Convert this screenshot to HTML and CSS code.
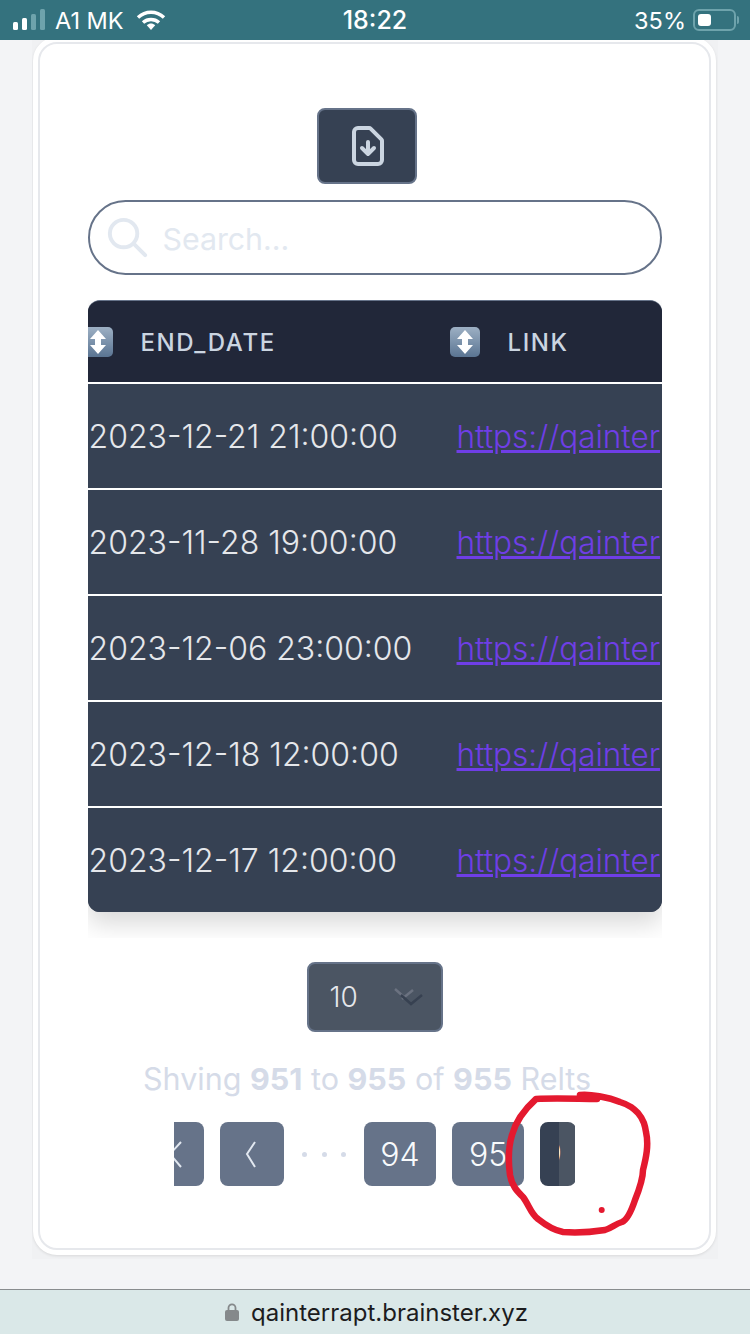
FILE: index.html
```html
<!DOCTYPE html>
<html lang="en">
<head>
  <meta charset="UTF-8" />
  <meta name="viewport" content="width=device-width, initial-scale=1.0" />
  <title>Events</title>
  <link rel="stylesheet" href="styles.css">
</head>
<body>
  <!-- Phone status bar -->
  <div class="status-bar">
    <div class="status-left">
      <svg class="signal" width="33" height="22" viewBox="0 0 33 22">
        <rect x="0" y="13" width="5" height="8" rx="1.5" fill="#fff"/>
        <rect x="9" y="9" width="5" height="12" rx="1.5" fill="#fff"/>
        <rect x="18" y="5" width="5" height="16" rx="1.5" fill="#6ea3ac"/>
        <rect x="27" y="0" width="5" height="21" rx="1.5" fill="#6ea3ac"/>
      </svg>
      <span class="carrier">A1 MK</span>
      <svg class="wifi" width="30" height="20" viewBox="0 0 30 20">
        <path d="M2 7.5C9.500 0.500 20.500 0.500 28 7.500" fill="none" stroke="#fff" stroke-width="3.400"/>
        <path d="M7 12.500C11.500 8.500 18.500 8.500 23 12.500" fill="none" stroke="#fff" stroke-width="3.400"/>
        <path d="M10.800 15.200C13.500 13 16.500 13 19.200 15.200L15 20Z" fill="#fff"/>
      </svg>
    </div>
    <div class="status-time">18:22</div>
    <div class="status-right">
      <span class="battery-pct">35%</span>
      <div class="battery"><div class="battery-fill"></div></div>
      <div class="battery-nub"></div>
    </div>
  </div>

  <main class="page">
    <div class="card-clip">
      <div class="card">
        <button class="export-btn" type="button">
          <svg width="48" height="48" viewBox="0 0 24 24" fill="none" stroke="#cbd5e1" stroke-width="2" stroke-linecap="round" stroke-linejoin="round">
            <path d="M12 10v6m0 0l-3-3m3 3l3-3m2 8H7a2 2 0 01-2-2V5a2 2 0 012-2h5.586a1 1 0 01.707.293l5.414 5.414a1 1 0 01.293.707V19a2 2 0 01-2 2z"/>
          </svg>
        </button>

        <div class="search">
          <svg width="47" height="47" viewBox="0 0 24 24" fill="none" stroke="#e2e8f0" stroke-width="2" stroke-linecap="round" stroke-linejoin="round">
            <path d="M21 21l-6-6m2-5a7 7 0 11-14 0 7 7 0 0114 0z"/>
          </svg>
          <span class="search-text">Search...</span>
        </div>

        <div class="table-clip">
          <div class="table-box">
            <table class="events">
              <thead>
                <tr>
                  <th>
                    <svg class="sort" width="30" height="30" viewBox="0 0 30 30"><use href="#sort-icon"/></svg>END_DATE
                  </th>
                  <th class="col-link">
                    <svg class="sort" width="30" height="30" viewBox="0 0 30 30"><use href="#sort-icon"/></svg>LINK
                  </th>
                </tr>
              </thead>
              <tbody>
                <tr><td>2023-12-21 21:00:00</td><td class="col-link"><a href="#">https://qainter</a></td></tr>
                <tr><td>2023-11-28 19:00:00</td><td class="col-link"><a href="#">https://qainter</a></td></tr>
                <tr><td>2023-12-06 23:00:00</td><td class="col-link"><a href="#">https://qainter</a></td></tr>
                <tr><td>2023-12-18 12:00:00</td><td class="col-link"><a href="#">https://qainter</a></td></tr>
                <tr><td>2023-12-17 12:00:00</td><td class="col-link"><a href="#">https://qainter</a></td></tr>
              </tbody>
            </table>
          </div>
        </div>

        <div class="per-page">
          <span>10</span>
          <svg width="30" height="18" viewBox="0 0 30 18" fill="none" stroke-width="2.500">
            <path d="M1 1L10 9" stroke="#6b7280"/>
            <path d="M19 2L8 11" stroke="#6b7280"/>
            <path d="M7 7L17 16L28 7" stroke="#374151"/>
          </svg>
        </div>

        <p class="summary">Shving <b>951</b> to <b>955</b> of <b>955</b> Relts</p>

        <div class="pager">
          <div class="page-btn page-first">
            <svg width="64" height="64" viewBox="0 0 64 64" fill="none" stroke="#e2e8f0" stroke-width="2"><path d="M41 20L30 32L41 45"/></svg>
          </div>
          <div class="page-btn">
            <svg width="64" height="64" viewBox="0 0 64 64" fill="none" stroke="#e2e8f0" stroke-width="2"><path d="M35 20L27 32L35 45"/></svg>
          </div>
          <div class="page-dots"><i></i><i></i><i></i></div>
          <div class="page-btn page-num">94</div>
          <div class="page-btn page-num">95</div>
          <div class="page-current">
            <div class="current-left"></div>
            <div class="current-right"><span>9</span></div>
          </div>
        </div>
      </div>
    </div>
  </main>

  <!-- Browser address bar -->
  <div class="url-bar">
    <svg width="14" height="18" viewBox="0 0 14 18">
      <path d="M3.500 8V4.800a3.500 3.500 0 017 0V8" fill="none" stroke="#85898b" stroke-width="1.800"/>
      <rect x="0" y="7" width="14" height="11" rx="2" fill="#85898b"/>
    </svg>
    <span>qainterrapt.brainster.xyz</span>
  </div>

  <!-- Red marker drawn over the screenshot -->
  <svg class="scribble" width="160" height="150" viewBox="0 0 160 150" fill="none" stroke="#e4192f" stroke-width="6.500" stroke-linecap="round" stroke-linejoin="round">
    <path d="M80 5C90 4 108 7 120 12C130 15 134 19 138 23C144 30 145 36 146 42C149 55 146 68 143 80C143 90 139 100 135 110C131 122 127 130 122 132C115 134 112 138 105 140C92 142 75 143 63 142C52 140 43 133 38 129C31 124 29 115 23 107C17 101 12 96 10 85C8 70 8 58 12 45C16 30 26 18 36 9C55 8 80 9 97 9"/>
    <circle cx="101.700" cy="120" r="3" fill="#e4192f" stroke="none"/>
  </svg>

  <svg class="defs" width="0" height="0">
    <defs>
      <linearGradient id="sort-grad" x1="0" y1="0" x2="0" y2="1">
        <stop offset="0" stop-color="#9db0c4"/>
        <stop offset="1" stop-color="#5a7492"/>
      </linearGradient>
      <g id="sort-icon">
        <rect width="30" height="30" rx="5" fill="url(#sort-grad)"/>
        <path d="M15 3L23 12H18V18H23L15 27L7 18H12V12H7Z" fill="#fff"/>
      </g>
    </defs>
  </svg>
</body>
</html>
```

FILE: styles.css
```css
:root {
  --slate-900: #212739;
  --slate-800: #364153;
  --slate-700: #4b5563;
  --slate-500: #667389;
  --slate-300: #cbd5e1;
  --slate-200: #e2e8f0;
}

* {
  box-sizing: border-box;
}

html, body {
  height: 100%;
}

body {
  margin: 0;
  position: relative;
  display: flex;
  flex-direction: column;
  width: 750px;
  height: 1334px;
  overflow: hidden;
  font-family: 'Inter', 'Liberation Sans', sans-serif;
  background-color: #f3f4f6;
}

/* status bar */
.status-bar {
  flex: none;
  height: 40px;
  padding: 0 13px;
  display: grid;
  grid-template-columns: 1fr auto 1fr;
  align-items: center;
  background-color: #34727e;
  color: #fff;
  font-size: 23.5px;
}

.status-left {
  display: flex;
  align-items: center;
}

.carrier {
  margin-left: 9px;
}

.wifi {
  margin-left: 12px;
}

.status-time {
  font-size: 25px;
  font-weight: 500;
}

.status-right {
  display: flex;
  align-items: center;
  justify-content: flex-end;
}

.battery {
  width: 43px;
  height: 22px;
  margin-left: 7px;
  padding: 3px;
  border: 2px solid #6ea3ac;
  border-radius: 6px;
}

.battery-fill {
  width: 13px;
  height: 100%;
  background-color: #fff;
  border-radius: 3px;
}

.battery-nub {
  width: 2px;
  height: 8px;
  margin-left: 1px;
  margin-right: -2px;
  background-color: #6ea3ac;
  border-radius: 0 2px 2px 0;
}

/* page + card */
.page {
  flex: 1;
  min-height: 0;
}

.card-clip {
  width: 686px;
  height: 1219px;
  margin-left: 32px;
  overflow: hidden;
  background-color: #f0f1f3;
}

.card {
  display: flex;
  flex-direction: column;
  align-items: center;
  width: 683px;
  height: 1218px;
  margin: -3px 0 0 1px;
  padding: 66px 50px 0;
  background-color: #fff;
  border: 5px solid #fff;
  border-radius: 24px;
  outline: 2px solid #e6e8ec;
  outline-offset: -7px;
  box-shadow: 0 1px 3px rgba(0, 0, 0, 0.1);
}

.export-btn {
  flex: none;
  width: 100px;
  height: 76px;
  margin-right: 16px;
  padding: 0 0 0 3px;
  display: flex;
  align-items: center;
  justify-content: center;
  background-color: var(--slate-800);
  border: 2px solid var(--slate-500);
  border-radius: 8px;
}

.search {
  flex: none;
  display: flex;
  align-items: center;
  width: 574px;
  height: 75px;
  margin-top: 16px;
  padding-left: 14px;
  border: 2px solid var(--slate-500);
  border-radius: 38px;
}

.search-text {
  margin: 2px 0 0 12px;
  font-size: 30.3px;
  color: var(--slate-200);
}

/* table */
.table-clip {
  flex: none;
  width: 574px;
  height: 638px;
  margin-top: 25px;
  overflow: hidden;
}

.table-box {
  height: 612px;
  overflow: hidden;
  border-top: 1px solid var(--slate-500);
  border-radius: 12px;
  box-shadow: 0 12px 24px rgba(0, 0, 0, 0.15);
  background-color: var(--slate-800);
}

.events {
  width: 766px;
  margin-left: -5px;
  table-layout: fixed;
  border-collapse: separate;
  border-spacing: 0;
}

.events th {
  width: 367px;
  height: 81px;
  padding: 0;
  text-align: left;
  font-size: 24px;
  font-weight: 500;
  letter-spacing: 1.6px;
  color: var(--slate-300);
  background-color: var(--slate-900);
}

.events th.col-link {
  width: 399px;
}

.sort {
  vertical-align: -6px;
  margin-right: 28px;
}

.events td {
  height: 106px;
  padding: 0 0 0 6px;
  font-size: 32px;
  font-weight: 300;
  white-space: nowrap;
  color: #e5e7eb;
  border-top: 2px solid #fff;
  background-color: var(--slate-800);
}

.events td.col-link {
  padding-left: 7px;
}

.events a {
  font-size: 31.5px;
  color: #6f3ee6;
}

/* per page */
.per-page {
  flex: none;
  display: flex;
  align-items: center;
  justify-content: space-between;
  width: 136px;
  height: 70px;
  margin-top: 24px;
  padding: 0 17px 0 21px;
  font-size: 28px;
  font-weight: 300;
  color: #e5e7eb;
  background-color: var(--slate-700);
  border: 2px solid var(--slate-500);
  border-radius: 8px;
}

.summary {
  flex: none;
  margin: 27px 15px 0 0;
  font-size: 30.5px;
  line-height: 40px;
  font-weight: 400;
  white-space: nowrap;
  color: #d5dbe8;
}

/* pager */
.pager {
  flex: none;
  align-self: flex-start;
  display: flex;
  width: 401px;
  height: 64px;
  margin: 23px 0 0 86px;
  gap: 16px;
  overflow: hidden;
}

.page-btn {
  flex: none;
  width: 64px;
  height: 64px;
  display: flex;
  align-items: center;
  justify-content: center;
  background-color: var(--slate-500);
  border-radius: 8px;
}

.page-first {
  margin-left: -34px;
}

.page-num {
  width: 72px;
  font-size: 32px;
  font-weight: 300;
  color: #f8fafc;
}

.page-dots {
  flex: none;
  width: 48px;
  padding: 0 2px;
  display: flex;
  align-items: center;
  justify-content: space-between;
}

.page-dots i {
  display: block;
  width: 5px;
  height: 5px;
  background-color: #d5dbe8;
  border-radius: 50%;
}

.page-current {
  flex: none;
  display: flex;
  width: 36px;
  height: 64px;
  overflow: hidden;
  border-radius: 8px;
}

.current-left {
  width: 19px;
  background-color: var(--slate-800);
}

.current-right {
  width: 17px;
  overflow: hidden;
  background-color: var(--slate-700);
  font-size: 32px;
  line-height: 64px;
  color: #f8fafc;
}

.current-right span {
  margin-left: -17px;
}

/* address bar */
.url-bar {
  flex: none;
  height: 45px;
  padding-left: 3px;
  display: flex;
  align-items: center;
  justify-content: center;
  gap: 12px;
  font-size: 24px;
  color: #1c1c1e;
  background-color: #dae8e8;
  border-top: 1px solid #888c8e;
}

.scribble {
  position: absolute;
  left: 500px;
  top: 1090px;
}

.defs {
  position: absolute;
}
```
